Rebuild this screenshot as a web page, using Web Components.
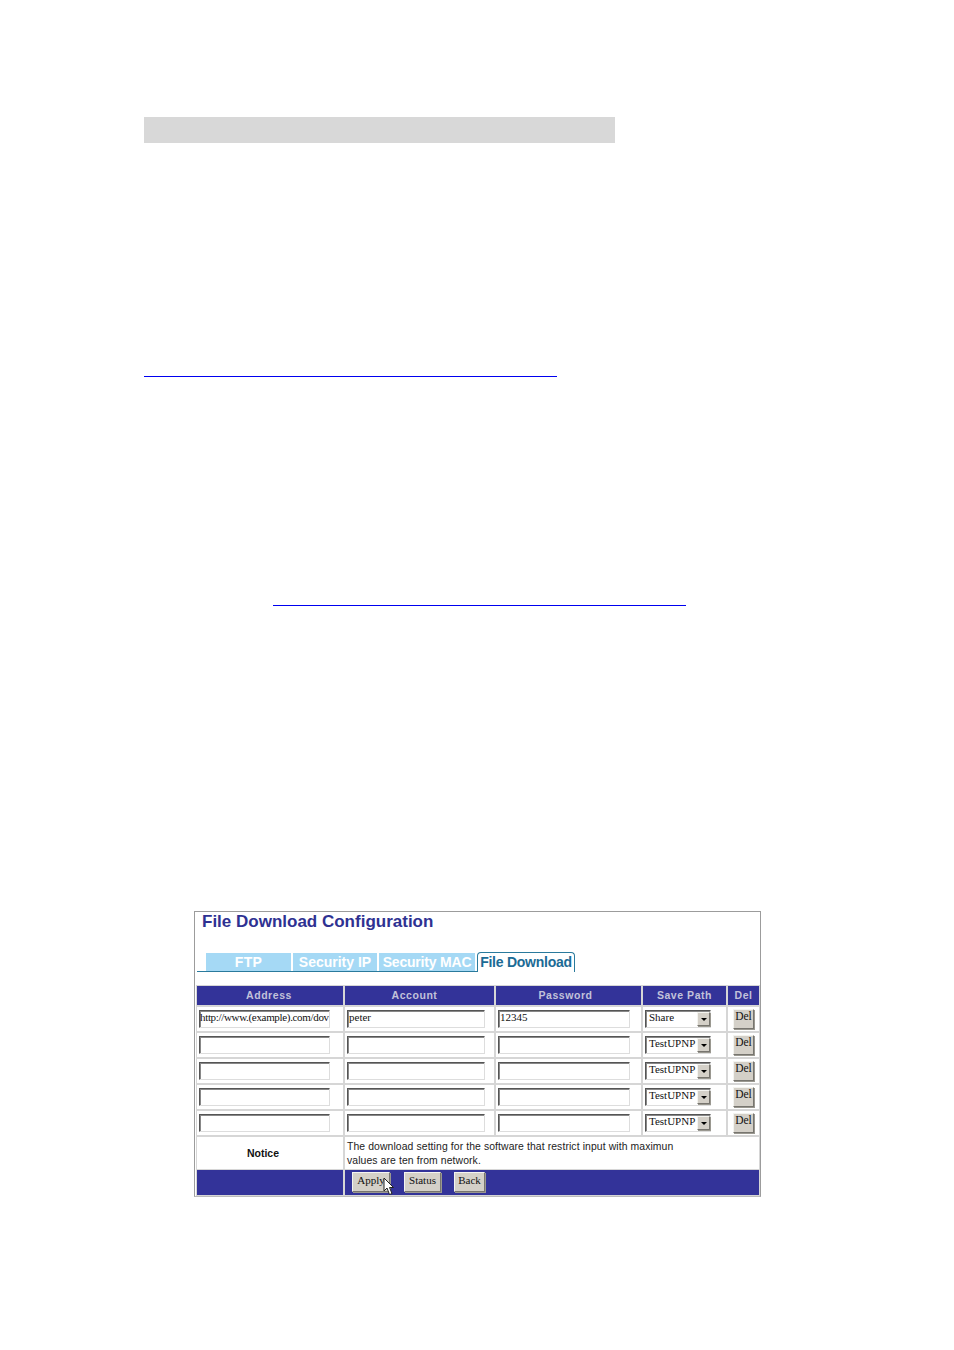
<!DOCTYPE html>
<html>
<head>
<meta charset="utf-8">
<title>File Download Configuration</title>
<style>
  html, body { margin: 0; background: #fff; }
  body { font-family: "Liberation Sans", Arial, sans-serif; }
</style>
</head>
<body>
<doc-page>
  <config-panel heading="File Download Configuration">
    <tab-item slot="tabs" width="85" spacing="0.3" label="FTP"></tab-item>
    <tab-item slot="tabs" width="84" spacing="0" label="Security IP"></tab-item>
    <tab-item slot="tabs" width="96" spacing="-0.2" label="Security MAC"></tab-item>
    <tab-item slot="tabs" width="98" spacing="-0.25" label="File Download" active></tab-item>

    <head-row></head-row>
    <download-row address="http://www.(example).com/dov" account="peter" password="12345" path="Share"></download-row>
    <download-row path="TestUPNP"></download-row>
    <download-row path="TestUPNP"></download-row>
    <download-row path="TestUPNP"></download-row>
    <download-row path="TestUPNP"></download-row>
    <notice-row>The download setting for the software that restrict input with maximun<br>values are ten from network.</notice-row>
    <action-row></action-row>
  </config-panel>
</doc-page>

<script>
// columns shared by every row of the table
const COLS = '148px 151px 147px 85px 33px';

const BEVEL_IN = `border: 1px solid; border-color: #555 #ddd #ddd #555; box-shadow: inset 1px 1px 0 #888;`;
const BEVEL_OUT = `border: 1px solid; border-color: #f4f4f0 #77756f #77756f #f4f4f0; box-shadow: 1px 1px 0 #9a9890;`;

class DocPage extends HTMLElement {
    constructor() {
        super();
        this.attachShadow({ mode: 'open' });
        this.shadowRoot.innerHTML = `
            <style>
                :host { display: block; width: 954px; height: 1350px; box-sizing: border-box; padding-top: 117px; background: #fff; }
                .band { width: 471px; height: 26px; margin-left: 144px; background: #d8d8d8; }
                .rule { width: 413px; height: 1px; background: #0000f0; }
                .one { margin: 233px 0 0 144px; }
                .two { margin: 228px 0 0 273px; }
                .panel { display: block; margin: 305px 0 0 194px; }
            </style>
            <div class="band"></div>
            <div class="rule one"></div>
            <div class="rule two"></div>
            <div class="panel"><slot></slot></div>
        `;
    }
}

class ConfigPanel extends HTMLElement {
    constructor() {
        super();
        this.attachShadow({ mode: 'open' });
        this.shadowRoot.innerHTML = `
            <style>
                :host { display: block; width: 567px; box-sizing: border-box; border: 1px solid #9c9c9c; border-bottom-color: #bbb; background: #fff; }
                h1 { margin: 0; padding: 0 0 0 7px; height: 39px; font: bold 17px/19px "Liberation Sans", Arial, sans-serif; color: #2e3192; }
                .tabs { display: flex; align-items: flex-end; gap: 2px; height: 20px; margin: 0 0 0 2px; padding-left: 9px; border-bottom: 1px solid #2a7a9c; width: 272px; box-sizing: content-box; }
                .table { margin: 13px 0 0 1px; }
            </style>
            <h1></h1>
            <div class="tabs"><slot name="tabs"></slot></div>
            <div class="table"><slot></slot></div>
        `;
        this.shadowRoot.querySelector('h1').textContent = this.getAttribute('heading');
    }
}

class TabItem extends HTMLElement {
    constructor() {
        super();
        this.attachShadow({ mode: 'open' });
        this.shadowRoot.innerHTML = `
            <style>
                :host { display: block; flex: none; box-sizing: border-box; height: 18px; background: #a5d9f5; color: #fff; text-align: center; white-space: nowrap; font: bold 14px/18px "Liberation Sans", Arial, sans-serif; }
                :host([active]) { height: 20px; margin-bottom: -1px; background: #fff; color: #1c6b95; border: 1px solid #2a7a9c; border-bottom: 0; border-radius: 4px 4px 0 0; line-height: 19px; position: relative; }
            </style>
            <span></span>
        `;
        this.style.width = this.getAttribute('width') + 'px';
        this.style.letterSpacing = this.getAttribute('spacing') + 'px';
        this.shadowRoot.querySelector('span').textContent = this.getAttribute('label');
    }
}

class HeadRow extends HTMLElement {
    constructor() {
        super();
        this.attachShadow({ mode: 'open' });
        const names = ['Address', 'Account', 'Password', 'Save Path', 'Del'];
        this.shadowRoot.innerHTML = `
            <style>
                :host { display: grid; grid-template-columns: ${COLS}; height: 21px; }
                div { box-sizing: border-box; border: 1px solid #d6d6d6; background: #333399; color: #c2c2da; text-align: center; font: bold 10.5px/19px "Liberation Sans", Arial, sans-serif; letter-spacing: 0.55px; }
                div:nth-of-type(1) { padding-right: 2px; }
                div:nth-of-type(2) { padding-right: 10px; }
                div:nth-of-type(3) { padding-right: 6px; }
            </style>
            ${names.map(n => `<div>${n}</div>`).join('')}
        `;
    }
}

class DownloadRow extends HTMLElement {
    constructor() {
        super();
        this.attachShadow({ mode: 'open' });
        this.shadowRoot.innerHTML = `
            <style>
                :host { display: grid; grid-template-columns: ${COLS}; height: 26px; }
                .cell { box-sizing: border-box; border: 1px solid #d6d6d6; display: flex; align-items: center; padding-left: 2px; }
                .field { box-sizing: border-box; height: 18px; background: #fff; overflow: hidden; white-space: nowrap; ${BEVEL_IN}; font: 11px/12px "Liberation Serif", "Times New Roman", serif; color: #111; padding-left: 1px; }
                .addr { width: 131px; padding-left: 0; letter-spacing: -0.33px; }
                .acct { width: 138px; }
                .pass { width: 132px; }
                .select { box-sizing: border-box; width: 66px; height: 18px; display: flex; justify-content: space-between; background: #fff; ${BEVEL_IN}; font: 11px/12px "Liberation Serif", "Times New Roman", serif; color: #111; padding-left: 3px; }
                .arrow { flex: none; width: 13px; height: 14px; margin-top: 1px; box-sizing: border-box; background: #d4d0c8; ${BEVEL_OUT}; display: flex; align-items: center; justify-content: center; }
                .arrow::after { content: ''; border: 3px solid transparent; border-top: 3px solid #000; border-bottom: 0; }
                .del { box-sizing: border-box; width: 21px; height: 20px; margin-left: 3px; background: #d4d0c8; ${BEVEL_OUT}; text-align: center; font: 11.5px/12px "Liberation Serif", "Times New Roman", serif; color: #111; }
            </style>
            <div class="cell"><div class="field addr"></div></div>
            <div class="cell"><div class="field acct"></div></div>
            <div class="cell"><div class="field pass"></div></div>
            <div class="cell"><div class="select"><span class="val"></span><span class="arrow"></span></div></div>
            <div class="cell"><div class="del">Del</div></div>
        `;
        const root = this.shadowRoot;
        root.querySelector('.addr').textContent = this.getAttribute('address') || '';
        root.querySelector('.acct').textContent = this.getAttribute('account') || '';
        root.querySelector('.pass').textContent = this.getAttribute('password') || '';
        root.querySelector('.val').textContent = this.getAttribute('path') || '';
    }
}

class NoticeRow extends HTMLElement {
    constructor() {
        super();
        this.attachShadow({ mode: 'open' });
        this.shadowRoot.innerHTML = `
            <style>
                :host { display: grid; grid-template-columns: 148px 416px; height: 33px; }
                div { box-sizing: border-box; border: 1px solid #d6d6d6; }
                .label { text-align: center; padding-right: 14px; font: bold 10.5px/33px "Liberation Sans", Arial, sans-serif; color: #111; }
                .text { padding: 3px 0 0 2px; font: 10.4px/14px "Liberation Sans", Arial, sans-serif; color: #222; letter-spacing: 0.1px; white-space: nowrap; }
            </style>
            <div class="label">Notice</div>
            <div class="text"><slot></slot></div>
        `;
    }
}

class ActionRow extends HTMLElement {
    constructor() {
        super();
        this.attachShadow({ mode: 'open' });
        this.shadowRoot.innerHTML = `
            <style>
                :host { display: grid; grid-template-columns: 148px 416px; height: 27px; position: relative; }
                .bar { box-sizing: border-box; border: 1px solid #d6d6d6; background: #333399; }
                .btns { display: flex; align-items: center; padding: 0 0 2px 7px; }
                .btn { box-sizing: border-box; height: 20px; background: #d4d0c8; ${BEVEL_OUT}; text-align: center; font: 11px/14px "Liberation Serif", "Times New Roman", serif; color: #111; }
                .apply { width: 38px; }
                .status { width: 37px; margin-left: 14px; }
                .back { width: 31px; margin-left: 13px; }
                svg { position: absolute; left: 187px; top: 8px; }
            </style>
            <div class="bar"></div>
            <div class="bar btns">
                <div class="btn apply">Apply</div>
                <div class="btn status">Status</div>
                <div class="btn back">Back</div>
            </div>
            <svg width="11" height="19" viewBox="0 0 11 19"><path d="M1 1 L1 14 L4 11 L6.5 17.5 L9 16.5 L6.5 10.5 L10.5 10.5 Z" fill="#fff" stroke="#222" stroke-width="1"/></svg>
        `;
    }
}

customElements.define('doc-page', DocPage);
customElements.define('config-panel', ConfigPanel);
customElements.define('tab-item', TabItem);
customElements.define('head-row', HeadRow);
customElements.define('download-row', DownloadRow);
customElements.define('notice-row', NoticeRow);
customElements.define('action-row', ActionRow);
</script>
</body>
</html>
